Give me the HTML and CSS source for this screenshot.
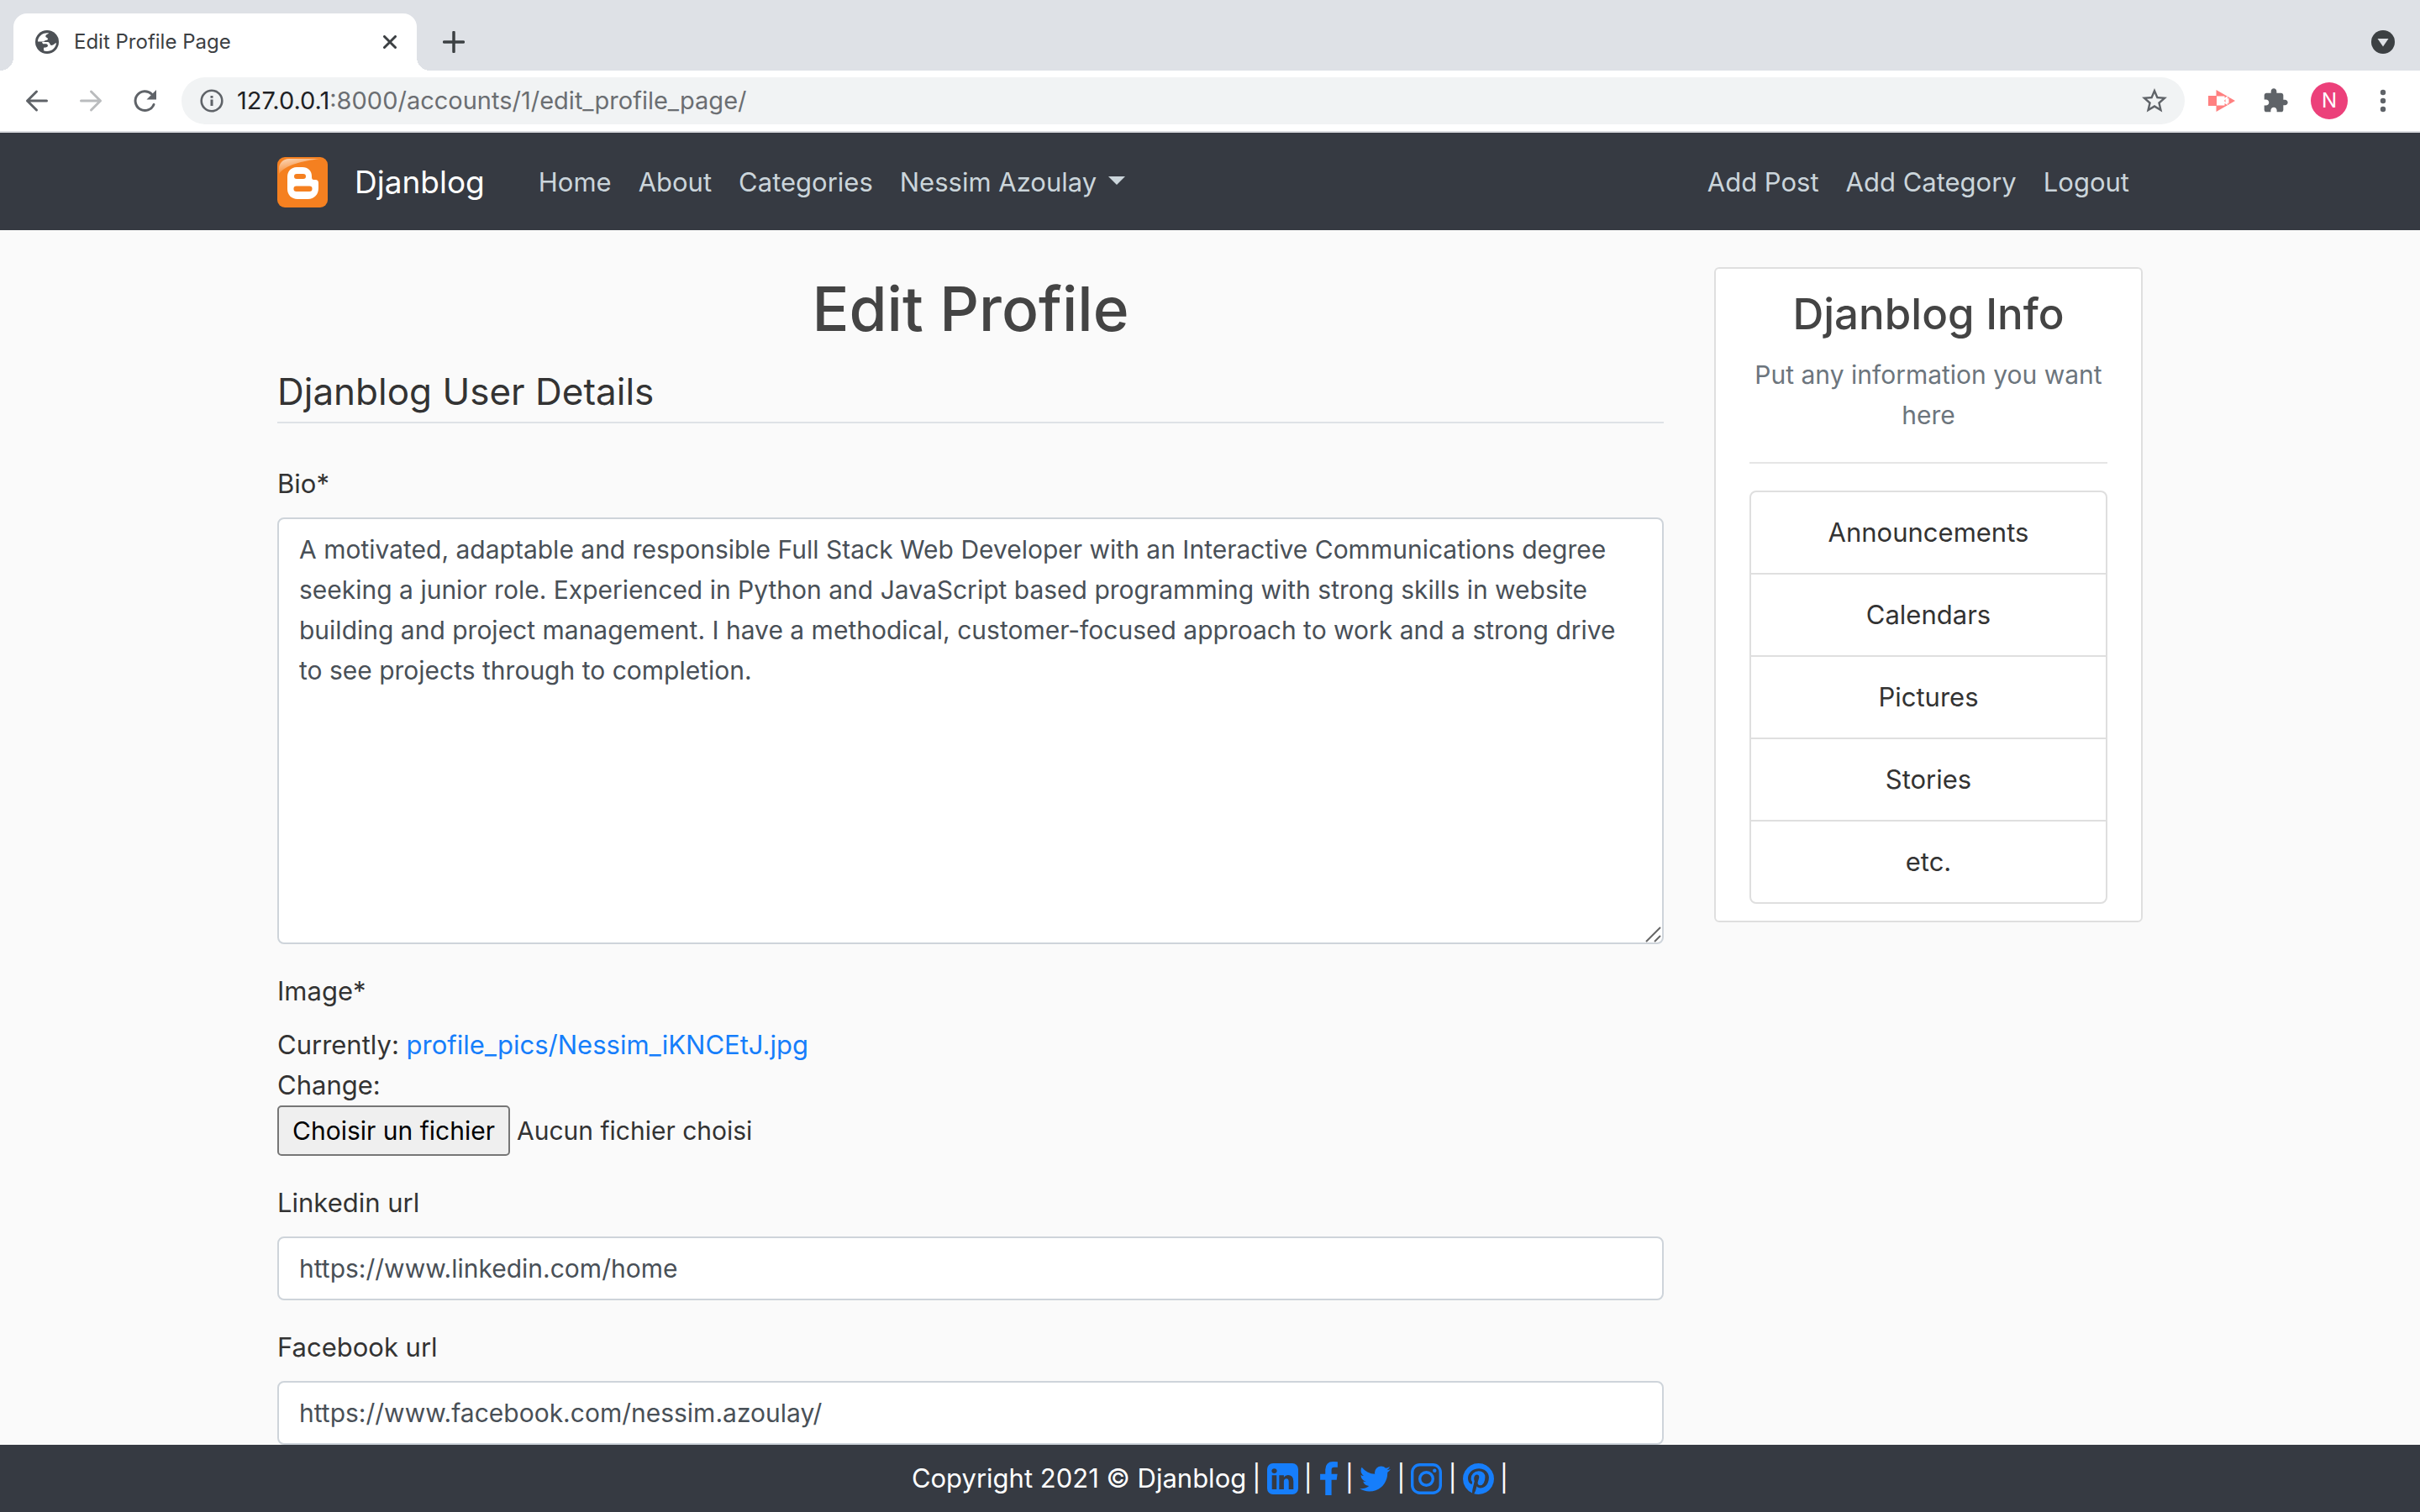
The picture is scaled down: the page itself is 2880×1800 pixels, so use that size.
FILE: index.html
```html
<!DOCTYPE html>
<html lang="en">
<head>
<meta charset="utf-8">
<title>Edit Profile Page</title>
<link rel="stylesheet" href="styles.css">
</head>
<body>
<div class="tab-strip">
  <div class="tab">
    <svg class="favicon" viewBox="0 0 28 28" aria-hidden="true"><circle cx="14" cy="14" r="14" fill="#4d5156"/><path fill="#fff" d="M16 3.3C15.500 5 12.300 4.800 12.300 7.300c0 1.700 2.700 1.300 2.700 3.200 0 2-4.500 1-4.500 3H3C3 8 8 2.700 16 3.300zM8 14h7c2.500 0 2 4 4.500 4s3-2.500 5.500-3C24.500 21 19.500 25 14 25c-1.500 0-3-.3-4-.8v-3.400c3.500 0 5-1 5-2.500s-1.500-2.100-3-2.100H9z"/></svg>
    <span class="tab-title">Edit Profile Page</span>
    <button class="icon-button" type="button" aria-label="Close tab"><svg width="16" height="16" viewBox="0 0 16 16"><path d="M1.500 1.500l13 13M14.500 1.500l-13 13" stroke="#3c4043" stroke-width="3" stroke-linecap="round"/></svg></button>
  </div>
  <button class="icon-button new-tab" type="button" aria-label="New tab"><svg width="26" height="26" viewBox="0 0 26 26"><path d="M13 1.500v23M1.500 13h23" stroke="#3c4043" stroke-width="3.500" stroke-linecap="round"/></svg></button>
  <button class="icon-button tab-search" type="button" aria-label="Search tabs"><svg width="28" height="28" viewBox="0 0 28 28"><circle cx="14" cy="14" r="14" fill="#3c4043"/><path d="M7.500 10h13L14 19.500z" fill="#dee1e6"/></svg></button>
</div>
<div class="toolbar">
  <div class="history">
    <button class="icon-button" type="button" aria-label="Back"><svg width="32" height="32" viewBox="0 0 32 32" fill="none" stroke="#5f6368" stroke-width="3" stroke-linecap="round" stroke-linejoin="round"><path d="M27.500 16H4.500M15.500 5L4.500 16l11 11"/></svg></button>
    <button class="icon-button" type="button" aria-label="Forward"><svg width="32" height="32" viewBox="0 0 32 32" fill="none" stroke="#babcbe" stroke-width="3" stroke-linecap="round" stroke-linejoin="round"><path d="M4.500 16h23M16.500 5l11 11-11 11"/></svg></button>
    <button class="icon-button" type="button" aria-label="Reload"><svg width="32" height="32" viewBox="0 0 32 32"><path d="M27 20.500A11.400 11.400 0 1 1 24.500 8" fill="none" stroke="#5f6368" stroke-width="3" stroke-linecap="round"/><path d="M30 3v11.500H18.500z" fill="#5f6368"/></svg></button>
  </div>
  <div class="omnibox">
    <svg width="28" height="28" viewBox="0 0 28 28" aria-hidden="true"><circle cx="14" cy="14" r="12.300" fill="none" stroke="#5f6368" stroke-width="2.600"/><path d="M12.500 12.500h3V20h-3zM12.500 8h3v2.800h-3z" fill="#5f6368"/></svg>
    <span class="url"><span class="url-host">127.0.0.1</span>:8000/accounts/1/edit_profile_page/</span>
    <button class="icon-button" type="button" aria-label="Bookmark"><svg width="36" height="36" viewBox="0 0 24 24" fill="#5f6368"><path d="M22 9.240l-7.190-.62L12 2 9.190 8.630 2 9.240l5.460 4.730L5.820 21 12 17.270 18.180 21l-1.630-7.030L22 9.240zM12 15.400l-3.760 2.270 1-4.280-3.320-2.880 4.380-.38L12 6.100l1.710 4.040 4.380.38-3.320 2.880 1 4.280L12 15.400z"/></svg></button>
  </div>
  <div class="extensions">
    <button class="icon-button" type="button" aria-label="Screen recorder"><svg width="32" height="32" viewBox="0 0 32 32"><path fill="#ff8080" d="M0 10h9.500V3L32 16 9.500 29v-7H0z"/><path fill="#fff" d="M10 10.500h9.500v2l3.500-2v3.500l1.500-2v8l-1.500-2V21l-3.500-2v2.500H10z"/><path fill="#ff8080" d="M20.500 14v4l-1.500-2z"/></svg></button>
    <button class="icon-button" type="button" aria-label="Extensions"><svg width="32" height="32" viewBox="0 0 24 24" fill="#5f6368"><path d="M20.500 11H19V7c0-1.100-.9-2-2-2h-4V3.500C13 2.120 11.880 1 10.500 1S8 2.120 8 3.500V5H4c-1.100 0-1.990.9-1.990 2v3.800H3.500c1.490 0 2.700 1.210 2.700 2.700s-1.210 2.700-2.700 2.700H2V20c0 1.100.9 2 2 2h3.800v-1.500c0-1.490 1.210-2.700 2.700-2.700 1.490 0 2.700 1.210 2.700 2.700V22H17c1.100 0 2-.9 2-2v-4h1.500c1.380 0 2.500-1.120 2.500-2.500S21.880 11 20.500 11z"/></svg></button>
  </div>
  <button class="avatar" type="button">N</button>
  <button class="icon-button" type="button" aria-label="Menu"><svg width="32" height="32" viewBox="0 0 32 32" fill="#5f6368"><circle cx="16" cy="6" r="3.200"/><circle cx="16" cy="16" r="3.200"/><circle cx="16" cy="26" r="3.200"/></svg></button>
</div>

<div class="viewport">
  <header class="navbar">
    <nav class="container nav-row">
      <a class="brand" href="#">
        <svg width="60" height="60" viewBox="0 0 60 60" aria-hidden="true">
          <defs><linearGradient id="gloss" x1="0" y1="0" x2="0.500" y2="1"><stop offset="0" stop-color="#fff" stop-opacity="0.700"/><stop offset="1" stop-color="#fff" stop-opacity="0"/></linearGradient></defs>
          <rect width="60" height="60" rx="9" fill="#f58020"/>
          <path fill="url(#gloss)" d="M2 20V14C2 7 7 2 14 2h36C30 5 10 9 2 20z"/>
          <path fill="#fff" fill-rule="evenodd" d="M23 12h7c6.500 0 11 4.500 11 10.500v1c0 3 1 3.500 4 3.500s4 1.500 4 4v6c0 7.500-5 13-12.500 13H24c-7 0-12-5-12-12V23.500C12 17 16.500 12 23 12zM23 20a3 3 0 0 0 0 6h8a3 3 0 0 0 0-6zM22.700 34.500a3.200 3.200 0 0 0 0 6.500h15.600a3.200 3.200 0 0 0 0-6.500z"/>
        </svg>
        Djanblog
      </a>
      <div class="nav-links">
        <a href="#">Home</a><a href="#">About</a><a href="#">Categories</a><a class="dropdown" href="#">Nessim Azoulay</a>
      </div>
      <div class="nav-links nav-end">
        <a href="#">Add Post</a><a href="#">Add Category</a><a href="#">Logout</a>
      </div>
    </nav>
  </header>

  <div class="container page">
    <main>
      <h1>Edit Profile</h1>
      <form>
        <fieldset>
          <legend>Djanblog User Details</legend>
          <div class="field">
            <label for="bio">Bio*</label>
            <div class="textarea-box">
              <textarea class="control" id="bio" rows="10">A motivated, adaptable and responsible Full Stack Web Developer with an Interactive Communications degree seeking a junior role. Experienced in Python and JavaScript based programming with strong skills in website building and project management. I have a methodical, customer-focused approach to work and a strong drive to see projects through to completion.</textarea>
              <svg class="resizer" viewBox="0 0 20 20" aria-hidden="true"><path d="M1 19L18 2M11 19l7-7" stroke="#666" stroke-width="2"/></svg>
            </div>
          </div>
          <div class="field">
            <label for="image">Image*</label>
            <div>Currently: <a href="#">profile_pics/Nessim_iKNCEtJ.jpg</a><br>Change:</div>
            <div class="file-row">
              <input type="file" id="image" hidden>
              <button class="file-button" type="button" onclick="document.getElementById('image').click()">Choisir un fichier</button>
              <span>Aucun fichier choisi</span>
            </div>
          </div>
          <div class="field">
            <label for="linkedin">Linkedin url</label>
            <input class="control" type="text" id="linkedin" value="https://www.linkedin.com/home">
          </div>
          <div class="field">
            <label for="facebook">Facebook url</label>
            <input class="control" type="text" id="facebook" value="https://www.facebook.com/nessim.azoulay/">
          </div>
        </fieldset>
      </form>
    </main>
    <aside class="card">
      <h3>Djanblog Info</h3>
      <p>Put any information you want here</p>
      <hr>
      <ul>
        <li>Announcements</li>
        <li>Calendars</li>
        <li>Pictures</li>
        <li>Stories</li>
        <li>etc.</li>
      </ul>
    </aside>
  </div>
</div>

<footer>
  <span>Copyright 2021 © Djanblog</span>
  <span>|</span>
  <a href="#" aria-label="LinkedIn"><svg width="37" height="37" viewBox="128 128 1536 1536"><path d="M365 1414h231v-694h-231v694zm246-908q-1-52-36-86t-93-34-94.500 34-36.500 86q0 51 35.500 85.500t92.500 34.500h1q59 0 95-34.500t36-85.500zm585 908h231v-398q0-154-73-233t-193-79q-136 0-209 117h2v-101h-231q3 66 0 694h231v-388q0-38 7-56 15-35 45-59.500t74-24.500q116 0 116 157v371zm468-998v960q0 119-84.500 203.500t-203.500 84.500h-960q-119 0-203.500-84.500t-84.500-203.500v-960q0-119 84.500-203.500t203.500-84.500h960q119 0 203.500 84.500t84.500 203.500z"/></svg></a>
  <span>|</span>
  <a class="facebook" href="#" aria-label="Facebook"><svg width="21" height="40" viewBox="479 0 864 1664"><path d="M1343 12v264h-157q-86 0-116 36t-30 108v189h293l-39 296h-254v759h-306v-759h-255v-296h255v-218q0-186 104-288.500t277-102.500q147 0 228 12z"/></svg></a>
  <span>|</span>
  <a href="#" aria-label="Twitter"><svg width="37" height="31" viewBox="108 236 1576 1320"><path d="M1684 408q-67 98-162 167 1 14 1 42 0 130-38 259.500t-115.500 248.500-184.500 210.500-258 146-323 54.500q-271 0-496-145 35 4 78 4 225 0 401-138-105-2-188-64.500t-114-159.500q33 5 61 5 43 0 85-11-112-23-185.500-111.500t-73.500-205.500v-4q68 38 146 41-66-44-105-115t-39-154q0-88 44-163 121 149 294.500 238.500t371.500 99.500q-8-38-8-74 0-134 94.500-228.500t228.500-94.500q140 0 236 102 109-21 205-78-37 115-142 178 93-10 186-50z"/></svg></a>
  <span>|</span>
  <a href="#" aria-label="Instagram"><svg width="37" height="37" viewBox="0 0 37 37"><g fill="none" stroke="#167efb"><rect x="1.700" y="1.700" width="33.600" height="33.600" rx="9" stroke-width="3.400"/><circle cx="18.500" cy="18.500" r="7.800" stroke-width="3.400"/></g><circle cx="28.300" cy="8.700" r="2.200"/></svg></a>
  <span>|</span>
  <a href="#" aria-label="Pinterest"><svg width="37" height="37" viewBox="128 128 1536 1536"><path d="M1664 896q0 209-103 385.500t-279.500 279.500-385.500 103q-111 0-218-32 59-93 78-164 9-34 54-211 20 39 73 67.500t114 28.500q121 0 216-68.500t147-188.500 52-270q0-114-59.500-214t-172.500-163-255-63q-105 0-196 29t-154.500 77-109 110.500-67 129.500-21.500 134q0 104 40 183t117 111q30 12 38-20 2-7 8-31t8-30q6-23-11-43-51-61-51-151 0-151 104.500-259.500t273.500-108.500q151 0 235.500 82t84.500 213q0 170-68.500 289t-175.500 119q-61 0-98-43.500t-23-104.500q8-35 26.500-93.500t30-103 11.500-75.500q0-50-27-83t-77-33q-62 0-105 57t-43 142q0 73 25 122l-99 418q-17 70-13 177-206-91-333-281t-127-423q0-209 103-385.500t279.500-279.500 385.500-103 385.500 103 279.500 279.500 103 385.500z"/></svg></a>
  <span>|</span>
</footer>
</body>
</html>
```
FILE: styles.css
```css
* { box-sizing: border-box; }

body {
  margin: 0;
  height: 100vh;
  display: flex;
  flex-direction: column;
  background: #fafafa;
  color: #333;
  font: 400 31px/48px Inter, "Liberation Sans", sans-serif;
}

a { color: #167efb; text-decoration: none; }
svg { display: block; }

.icon-button {
  padding: 0;
  border: 0;
  background: none;
}

/* Browser tab strip */
.tab-strip {
  flex: none;
  display: flex;
  align-items: center;
  height: 84px;
  padding: 16px 30px 0 16px;
  background: #dee1e6;
}

.tab {
  position: relative;
  align-self: stretch;
  display: flex;
  align-items: center;
  width: 480px;
  padding: 0 24px 0 26px;
  background: #fff;
  border-radius: 16px 16px 0 0;
}

.tab::before,
.tab::after {
  content: "";
  position: absolute;
  bottom: 0;
  width: 16px;
  height: 16px;
}

.tab::before {
  right: 100%;
  background: radial-gradient(circle at 0 0, transparent 16px, #fff 16px);
}

.tab::after {
  left: 100%;
  background: radial-gradient(circle at 100% 0, transparent 16px, #fff 16px);
}

.favicon { width: 28px; height: 28px; }

.tab-title {
  flex: 1;
  padding-left: 18px;
  font-size: 24px;
  color: #3c4043;
}

.new-tab { margin-left: 31px; }
.tab-search { margin-left: auto; }

/* Address bar */
.toolbar {
  flex: none;
  display: flex;
  align-items: center;
  gap: 26px;
  height: 74px;
  padding: 0 28px;
  background: #fff;
  border-bottom: 2px solid #dadce0;
}

.history,
.extensions { display: flex; gap: 32px; }

.omnibox {
  flex: 1;
  display: flex;
  align-items: center;
  gap: 16px;
  height: 56px;
  margin: 0 2px;
  padding: 0 18px 0 22px;
  border-radius: 28px;
  background: #f1f3f4;
}

.url {
  flex: 1;
  font-size: 29px;
  color: #6b6e72;
}

.url-host { color: #202124; }

.avatar {
  width: 44px;
  height: 44px;
  padding: 0;
  border: 0;
  border-radius: 50%;
  background: #ec407a;
  color: #fff;
  font: 400 24px/44px Inter, sans-serif;
}

/* Site */
.viewport {
  flex: 1;
  min-height: 0;
  overflow: hidden;
}

.container {
  max-width: 2280px;
  margin: 0 auto;
  padding: 0 30px;
}

.navbar {
  padding: 29px 0 27px;
  background: #363a42;
}

.nav-row {
  display: flex;
  align-items: center;
}

.brand {
  display: flex;
  align-items: center;
  gap: 32px;
  margin-right: 48px;
  color: #fff;
  font-size: 37px;
}

.nav-links { display: flex; }

.nav-links a {
  padding: 0 16px;
  color: #cbd5db;
}

.nav-end { margin-left: auto; }

.dropdown::after {
  content: "";
  display: inline-block;
  margin-left: 14px;
  vertical-align: 8px;
  border: 10px solid transparent;
  border-top-color: currentColor;
  border-bottom: 0;
}

.page {
  display: grid;
  grid-template-columns: minmax(0, 1650fr) minmax(0, 510fr);
  gap: 60px;
  align-items: start;
  padding-top: 44px;
}

h1,
h3 {
  margin: 0;
  color: #444;
  font-weight: 500;
  text-align: center;
}

h1 {
  margin-bottom: 12px;
  font-size: 73px;
  line-height: 100px;
}

fieldset {
  margin: 0;
  padding: 0;
  border: 0;
}

legend {
  width: 100%;
  margin-bottom: 48px;
  padding: 0;
  border-bottom: 2px solid #dee2e6;
  font-size: 44px;
  line-height: 72px;
}

.field { margin-bottom: 32px; }

.field label {
  display: block;
  margin-bottom: 16px;
}

.control {
  display: block;
  width: 100%;
  padding: 12px 24px;
  border: 2px solid #ced4da;
  border-radius: 8px;
  background: #fff;
  color: #495057;
  font: inherit;
  font-size: 30px;
}

input.control { height: 76px; }
textarea.control { resize: none; }

.textarea-box { position: relative; }

.resizer {
  position: absolute;
  right: 2px;
  bottom: 2px;
  width: 20px;
  height: 20px;
}

.file-row {
  display: flex;
  align-items: center;
  gap: 8px;
  font-size: 30px;
}

.file-button {
  height: 60px;
  padding: 0 16px;
  border: 2px solid #767676;
  border-radius: 5px;
  background: #efefef;
  color: #000;
  font: inherit;
}

.card {
  padding: 20px 40px;
  border: 2px solid #dfdfdf;
  border-radius: 6px;
  background: #fff;
  text-align: center;
}

.card h3 {
  margin-bottom: 14px;
  font-size: 51px;
  line-height: 68px;
}

.card p {
  margin: 0;
  color: #6c757d;
  font-size: 30px;
}

.card hr {
  margin: 32px 0;
  border: 0;
  border-top: 2px solid #e5e5e5;
}

.card ul {
  margin: 0;
  padding: 0;
  border: 2px solid #dfdfdf;
  border-radius: 8px;
  list-style: none;
}

.card li { padding: 24px 0; }
.card li + li { border-top: 2px solid #dfdfdf; }

footer {
  flex: none;
  display: flex;
  align-items: center;
  justify-content: center;
  gap: 7px;
  height: 80px;
  background: #363a42;
  color: #fff;
}

footer svg { fill: #167efb; }
footer .facebook { padding: 0 2px; }
```
